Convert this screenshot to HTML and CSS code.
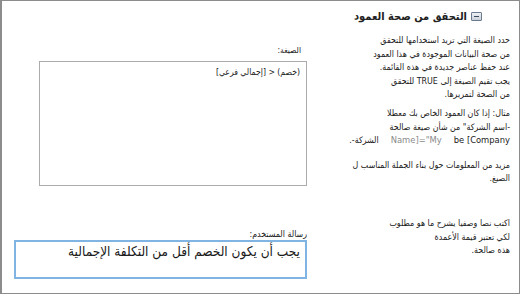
FILE: index.html
```html
<!DOCTYPE html>
<html lang="ar" dir="rtl">
<head>
    <meta charset="UTF-8">
    <title>التحقق من صحة العمود</title>
    <link rel="stylesheet" href="styles.css">
</head>
<body>
    <div class="frame">
        <div class="info">
            <h2 class="info-title">
                <span class="toggle"></span>
                التحقق من صحة العمود
            </h2>
            <p class="info-text">
                حدد الصيغة التي تريد استخدامها للتحقق<br>
                من صحة البيانات الموجودة في هذا العمود<br>
                عند حفظ عناصر جديدة في هذه القائمة.<br>
                يجب تقيم الصيغة إلى TRUE للتحقق<br>
                من الصحة لتمريرها.
            </p>
            <div class="info-text example">
                <p>مثال: إذا كان العمود الخاص بك معطلا</p>
                <p>-اسم الشركة" من شأن صيغة صالحة</p>
                <p class="example-line">
                    <span dir="ltr" class="latin">be [Company</span>
                    <span dir="ltr" class="latin dim">Name]="My</span>
                    <span>الشركة-.</span>
                </p>
            </div>
            <p class="info-text more">
                مزيد من المعلومات حول بناء الجملة المناسب ل<br>
                الصيغ.
            </p>
            <p class="info-text hint">
                اكتب نصا وصفيا يشرح ما هو مطلوب<br>
                لكي تعتبر قيمة الأعمدة<br>
                هذه صالحة.
            </p>
        </div>
        <div class="fields">
            <label class="field-label formula-label" for="formula">الصيغة:</label>
            <div class="formula-box" id="formula">(خصم) &lt; [إجمالي فرعي]</div>
            <label class="field-label message-label" for="message">رسالة المستخدم:</label>
            <div class="message-box" id="message">يجب أن يكون الخصم أقل من التكلفة الإجمالية</div>
        </div>
    </div>
</body>
</html>
```

FILE: styles.css
```css
* {
    margin: 0;
    padding: 0;
    box-sizing: border-box;
}

body {
    font-family: "DejaVu Sans Condensed", "DejaVu Sans", sans-serif;
    background: #fff;
    color: #1a1a1a;
}

.frame {
    width: 520px;
    height: 294px;
    border: 1px solid #8c8c8c;
    border-left-width: 2px;
    display: flex;
    overflow: hidden;
}

/* Right column: description */
.info {
    width: 208px;
    padding: 9px 9px 0 0;
}

.info-title {
    display: flex;
    align-items: center;
    gap: 4px;
    font-size: 11px;
    font-weight: bold;
    color: #222;
    padding-right: 28px;
    margin-bottom: 11px;
}

.toggle {
    width: 11px;
    height: 9px;
    border: 1px solid #6c7a8e;
    border-radius: 1px;
    background: linear-gradient(#eef1f5, #c9d0da);
    position: relative;
}

.toggle::after {
    content: "";
    position: absolute;
    left: 2px;
    right: 2px;
    top: 3px;
    height: 1px;
    background: #3d4a5c;
}

.info-text {
    font-size: 8.8px;
    line-height: 13.6px;
}

.example {
    margin-top: 5px;
}

.example-line {
    display: flex;
    gap: 12px;
}

.latin {
    font-family: "DejaVu Sans", sans-serif;
    font-size: 8.4px;
}

.dim {
    color: #8a8a8a;
}

.more {
    margin-top: 11px;
}

.hint {
    margin-top: 31px;
}

/* Left column: form fields */
.fields {
    flex: 1;
    display: flex;
    flex-direction: column;
    align-items: flex-start;
    padding: 43px 4px 0 0;
}

.field-label {
    font-size: 8.4px;
    line-height: 12px;
}

.formula-label {
    margin-right: 6px;
    margin-bottom: 5px;
}

.formula-box {
    width: 268px;
    height: 125px;
    border: 1px solid #ababab;
    font-size: 8.6px;
    padding: 5px 6px;
}

.message-label {
    margin-top: 42px;
    font-size: 8.8px;
}

.message-box {
    width: 293px;
    height: 39px;
    border: 2px solid #7fb4e3;
    font-size: 13.5px;
    line-height: 18px;
    padding: 0 5px;
    white-space: nowrap;
}
```
